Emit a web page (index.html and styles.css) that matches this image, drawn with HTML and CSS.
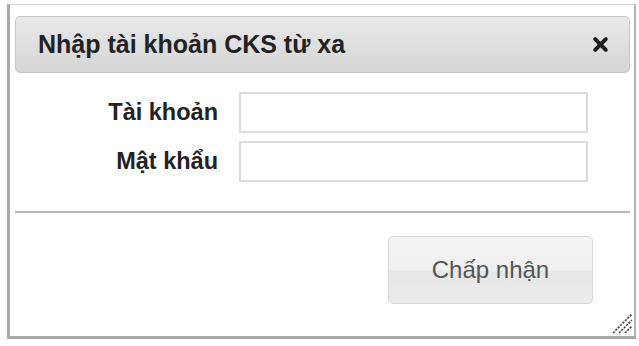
FILE: index.html
```html
<!DOCTYPE html>
<html lang="vi">
<head>
<meta charset="utf-8">
<title>Nhập tài khoản CKS từ xa</title>
<link rel="stylesheet" href="styles.css">
</head>
<body>
<div class="dialog">
  <div class="titlebar">
    <span class="title">Nhập tài khoản CKS từ xa</span>
    <button class="close" type="button" aria-label="Đóng">
      <svg width="17" height="17" viewBox="0 0 17 17"><path d="M3.2 3.2 L13.8 13.8 M13.8 3.2 L3.2 13.8" stroke="#1e1e1e" stroke-width="4" stroke-linecap="round"/></svg>
    </button>
  </div>
  <div class="content">
    <div class="row">
      <label class="label" for="acc">Tài khoản</label>
      <input class="field" id="acc" type="text">
    </div>
    <div class="row">
      <label class="label" for="pwd">Mật khẩu</label>
      <input class="field" id="pwd" type="password">
    </div>
  </div>
  <div class="buttonpane">
    <button class="btn" type="button">Chấp nhận</button>
  </div>
  <svg class="resize" width="22" height="22" viewBox="0 0 22 22">
    <g stroke="#444" stroke-width="1.6" stroke-dasharray="2.2 1.2">
      <path d="M2 21 L21 2"/>
      <path d="M8 21 L21 8"/>
      <path d="M14 21 L21 14"/>
    </g>
  </svg>
</div>
</body>
</html>
```
FILE: styles.css
```css
html, body {
  margin: 0;
  padding: 0;
  background: #fff;
}
body {
  font-family: "Liberation Sans", Arial, sans-serif;
  color: #222;
}
.dialog {
  position: relative;
  box-sizing: border-box;
  margin: 4px 4px 0 7px;
  width: 629px;
  height: 335px;
  border-top: 1px solid #d2d2d2;
  border-left: 3px solid #a9a9a9;
  border-right: 2px solid #b4b4b4;
  border-bottom: 3px solid #a9a9a9;
  background: #fff;
  padding: 11px 4px 0 5px;
  display: flex;
  flex-direction: column;
}
.titlebar {
  box-sizing: border-box;
  height: 57px;
  border: 1px solid #c6c6c6;
  border-radius: 5px;
  background: linear-gradient(#e9e9e9, #d5d5d5);
  display: flex;
  align-items: center;
  justify-content: space-between;
  padding: 0 20px 0 22px;
}
.title {
  font-weight: bold;
  font-size: 25px;
  color: #222;
}
.close {
  border: 0;
  background: transparent;
  padding: 0;
  width: 17px;
  height: 17px;
  display: flex;
}
.content {
  display: flex;
  flex-direction: column;
  gap: 8px;
  padding: 19px 0 29px;
  border-bottom: 2px solid #b8b8b8;
}
.row {
  display: flex;
  align-items: center;
  gap: 21px;
}
.label {
  width: 203px;
  text-align: right;
  font-weight: bold;
  font-size: 23.5px;
  color: #222;
}
.field {
  box-sizing: border-box;
  width: 349px;
  height: 41px;
  border: 2px solid #dcdcdc;
  margin: 0;
  padding: 0 8px;
  background: #fff;
  font-family: inherit;
  font-size: 16px;
}
.buttonpane {
  display: flex;
  justify-content: flex-end;
  padding: 23px 37px 0 0;
}
.btn {
  box-sizing: border-box;
  width: 205px;
  height: 68px;
  border: 1px solid #d6d6d6;
  border-radius: 5px;
  background: linear-gradient(#f4f4f4 0%, #efefef 50%, #e7e7e7 52%, #ececec 100%);
  font-family: "Liberation Sans", Arial, sans-serif;
  font-size: 24px;
  color: #555;
}
.resize {
  position: absolute;
  right: 1px;
  bottom: 2px;
}
```
